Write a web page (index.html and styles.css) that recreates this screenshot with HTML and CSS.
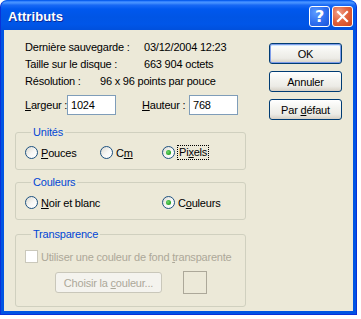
FILE: index.html
```html
<!DOCTYPE html>
<html>
<head>
<meta charset="utf-8">
<link rel="stylesheet" href="styles.css">
</head>
<body>
<div class="window">
  <div class="titlebar">
    <span class="title">Attributs</span>
    <div class="tbtns">
      <span class="tb help">?</span>
      <span class="tb close"><svg width="13" height="13" viewBox="0 0 13 13"><path d="M2 2 L11 11 M11 2 L2 11" stroke="#fff" stroke-width="2.2" stroke-linecap="square"/></svg></span>
    </div>
  </div>
  <div class="client">
    <div class="left">
      <div class="info">
        <div class="row"><span class="k k1">Dernière sauvegarde :</span><span>03/12/2004 12:23</span></div>
        <div class="row"><span class="k k1">Taille sur le disque :</span><span>663 904 octets</span></div>
        <div class="row"><span class="k k3">Résolution :</span><span>96 x 96 points par pouce</span></div>
      </div>
      <div class="dims">
        <span class="lab lab-w"><u>L</u>argeur :</span><span class="edit">1024</span>
        <span class="lab lab-h"><u>H</u>auteur :</span><span class="edit">768</span>
      </div>
      <fieldset class="group g-units">
        <legend>Unités</legend>
        <div class="opts">
          <span class="opt o-pouces"><span class="radio"></span><span><u>P</u>ouces</span></span>
          <span class="opt o-cm"><span class="radio"></span><span>C<u>m</u></span></span>
          <span class="opt"><span class="radio on"></span><span class="focus">Pi<u>x</u>els</span></span>
        </div>
      </fieldset>
      <fieldset class="group g-colors">
        <legend>Couleurs</legend>
        <div class="opts">
          <span class="opt o-noir"><span class="radio"></span><span><u>N</u>oir et blanc</span></span>
          <span class="opt"><span class="radio on"></span><span>C<u>o</u>uleurs</span></span>
        </div>
      </fieldset>
      <fieldset class="group g-transp">
        <legend>Transparence</legend>
        <div class="check-row"><span class="checkbox"></span><span class="dis">Utiliser une couleur de fond <u>t</u>ransparente</span></div>
        <div class="pick-row">
          <span class="btn btn-dis"><span>Choisir la <u>c</u>ouleur...</span></span>
          <span class="swatch"></span>
        </div>
      </fieldset>
    </div>
    <div class="right">
      <span class="btn btn-def"><span>OK</span></span>
      <span class="btn"><span>Annuler</span></span>
      <span class="btn"><span>Par <u>d</u>éfaut</span></span>
    </div>
  </div>
</div>
</body>
</html>
```
FILE: styles.css
```css
html, body { margin: 0; padding: 0; background: #fff; }
body { font-family: "Liberation Sans", Arial, sans-serif; font-size: 11px; color: #000; letter-spacing: -0.2px; white-space: nowrap; }

.window {
  width: 357px;
  height: 315px;
  box-sizing: border-box;
  background: #0054E3;
  border-radius: 7px 7px 0 0;
  border: 1px solid #0831D9;
  border-top-color: #0A5FEF;
  display: flex;
  flex-direction: column;
}
.titlebar {
  height: 29px;
  display: flex;
  align-items: center;
  justify-content: space-between;
  padding: 0 3px 0 7px;
  border-radius: 6px 6px 0 0;
  background: linear-gradient(to bottom, #2A7BFF 0%, #4A95FF 6%, #1869F5 14%, #0058EE 28%, #0055E5 55%, #0056E8 80%, #0050DC 100%);
}
.title {
  color: #fff;
  font-weight: bold;
  font-size: 13px;
  text-shadow: 1px 1px 0 #0B2A9A;
  letter-spacing: 0.1px;
  padding-top: 1px;
}
.tbtns { display: flex; gap: 2px; padding-top: 1px; }
.tb {
  width: 21px; height: 21px; box-sizing: border-box;
  border: 1px solid #fff;
  border-radius: 3px;
  display: flex; align-items: center; justify-content: center;
  color: #fff;
}
.help {
  background: radial-gradient(circle at 30% 30%, #5C9BFF 0%, #2E6EEF 55%, #1A52D8 100%);
  font: bold 16px "DejaVu Sans", sans-serif;
}
.close {
  background: radial-gradient(circle at 30% 30%, #F0A08A 0%, #E2643E 45%, #CC4420 100%);
}

.client {
  flex: 1;
  margin: 0 3px 3px 3px;
  background: #ECE9D8;
  display: flex;
}
.left { width: 242px; padding-left: 11px; box-sizing: border-box; }
.info { margin-top: 9px; margin-left: 10px; }
.row { display: flex; line-height: 17px; height: 17px; }
.k1 { width: 119px; }
.k3 { width: 75px; }

.dims { display: flex; align-items: center; margin-top: 5px; margin-left: 10px; height: 20px; }
.lab-w { width: 42px; flex: none; }
.lab-h { width: 47px; margin-left: 26px; flex: none; }
.edit {
  width: 49px; height: 20px; box-sizing: border-box;
  border: 1px solid #7F9DB9;
  background: #fff;
  padding: 0 3px;
  line-height: 18px;
  flex: none;
}

.group {
  margin: 0;
  width: 231px;
  box-sizing: border-box;
  border: 1px solid #D0D0BF;
  border-radius: 3px;
  padding: 0 0 0 9px;
}
.group legend {
  color: #0046D5;
  padding: 0 2px;
  margin-left: 6px;
  line-height: 13px;
}
.g-units { margin-top: 11px; padding-top: 7px; padding-bottom: 10px; }
.g-colors { margin-top: 6px; padding-top: 7px; padding-bottom: 10px; }
.g-transp { margin-top: 8px; padding-top: 9px; padding-bottom: 12px; }

.opts { display: flex; height: 13px; align-items: center; }
.opt { display: flex; align-items: center; gap: 3px; }
.o-pouces { width: 75px; }
.o-cm { width: 62px; }
.o-noir { width: 137px; }
.radio {
  width: 13px; height: 13px; box-sizing: border-box;
  border-radius: 50%;
  border: 1px solid #1C5180;
  background: linear-gradient(135deg, #DCD9D0 0%, #F8F8F6 55%, #fff 100%);
  display: flex; align-items: center; justify-content: center;
  flex: none;
}
.radio.on::after {
  content: "";
  width: 5px; height: 5px; border-radius: 50%;
  background: radial-gradient(circle at 40% 40%, #72D872 0%, #21A121 70%, #1A8A1A 100%);
}
.focus { outline: 1px dotted #000; outline-offset: 0; padding: 0 1px; line-height: 13px; }

.check-row { display: flex; align-items: center; gap: 3px; height: 13px; }
.checkbox {
  width: 13px; height: 13px; box-sizing: border-box;
  border: 1px solid #CAC8BB;
  background: #fff;
  flex: none;
}
.dis { color: #ACA899; }
.pick-row { display: flex; align-items: center; margin-top: 8px; margin-left: 30px; }
.swatch {
  width: 24px; height: 23px; box-sizing: border-box;
  border: 1px solid #ACA899;
  margin-left: 21px;
}

.right { display: flex; flex-direction: column; gap: 7px; padding-top: 13px; margin-left: 23px; }
.btn {
  width: 73px; height: 21px; box-sizing: border-box;
  border: 1px solid #003C74;
  border-radius: 3px;
  background: linear-gradient(to bottom, #FFFFFF 0%, #F4F4F0 40%, #ECEBE6 75%, #D6D0C5 100%);
  display: flex; align-items: center; justify-content: center;
}
.btn-def { box-shadow: inset 0 0 0 1px #7F9DE9, inset 0 1px 0 1px #CEE7FF; }
.btn-dis {
  width: 107px; height: 21px;
  border-color: #C9C7BA;
  color: #ACA899;
  background: #F4F3EE;
}
```
